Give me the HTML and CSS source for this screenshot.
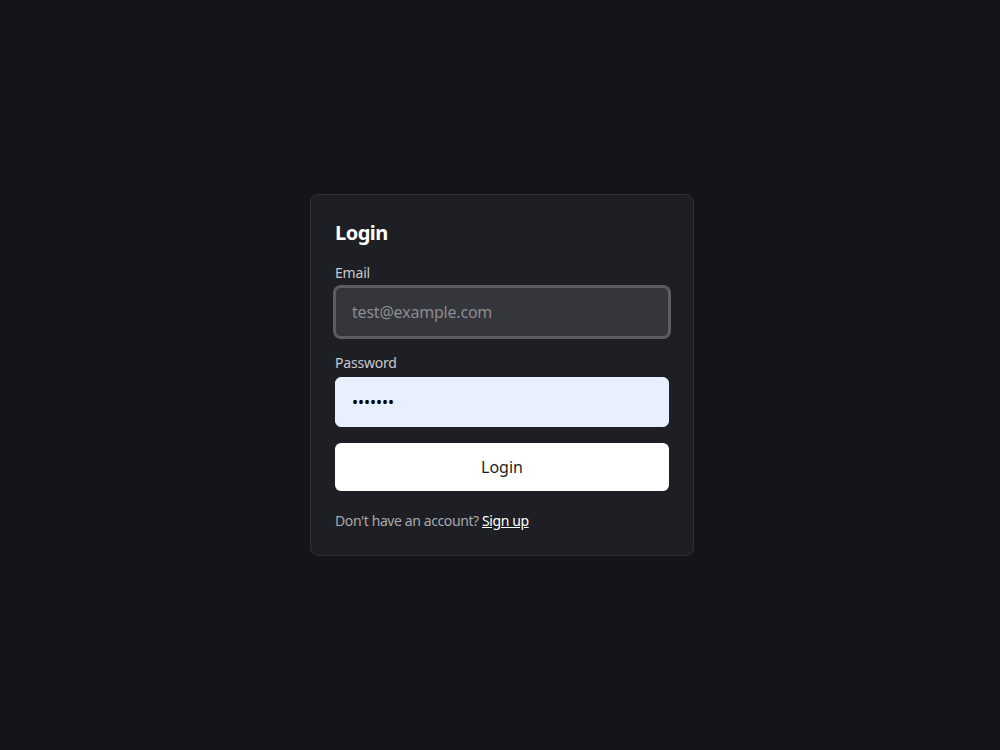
FILE: index.html
```html
<!DOCTYPE html>
<html lang="en">
<head>
<meta charset="utf-8">
<title>Login</title>
<link rel="stylesheet" href="styles.css">
</head>
<body>
<main class="page">
  <form class="card">
    <h1 class="title">Login</h1>
    <div class="field">
      <label class="label" for="email">Email</label>
      <input class="input input-focus" id="email" type="email" placeholder="test@example.com">
    </div>
    <div class="field">
      <label class="label" for="password">Password</label>
      <input class="input input-filled" id="password" type="password" value="1234567">
    </div>
    <button class="btn" type="button">Login</button>
    <p class="footer">Don't have an account? <a class="link" href="#">Sign up</a></p>
  </form>
</main>
</body>
</html>
```
FILE: styles.css
```css
* { box-sizing: border-box; }
html, body { margin: 0; height: 100%; }
body {
  background: #141519;
  font-family: "Noto Sans", "Open Sans", sans-serif;
  color: #e6e6ea;
}
.page {
  height: 100%;
  display: flex;
  align-items: center;
  justify-content: center;
  padding-left: 4px;
}
.card {
  width: 384px;
  background: #1e1f24;
  border: 1px solid #2f3036;
  border-radius: 8px;
  padding: 24px;
  display: flex;
  flex-direction: column;
}
.title {
  margin: 0 0 16px;
  font-size: 20px;
  line-height: 28px;
  font-weight: 700;
  color: #ffffff;
  letter-spacing: -0.5px;
}
.field {
  display: flex;
  flex-direction: column;
  gap: 4px;
  margin-bottom: 16px;
}
.label {
  font-size: 14px;
  line-height: 20px;
  color: #c9c9ce;
  letter-spacing: -0.2px;
}
.input {
  height: 50px;
  border-radius: 6px;
  padding: 0 16px;
  font-family: inherit;
  font-size: 16px;
  outline: none;
}
.input-focus {
  background: #35363b;
  border: 1px solid #5c5d62;
  box-shadow: 0 0 0 2px #5c5d62;
  color: #e6e6ea;
  letter-spacing: -0.2px;
}
.input-focus::placeholder { color: #8b8c91; }
.input-filled {
  background: #e8f0fe;
  border: 1px solid #e8f0fe;
  color: #000;
}
.btn {
  height: 48px;
  border: none;
  border-radius: 6px;
  background: #ffffff;
  color: #1e1f24;
  font-family: inherit;
  font-size: 16px;
  cursor: pointer;
}
.footer {
  margin: 20px 0 0;
  font-size: 14px;
  line-height: 20px;
  color: #a8a8ad;
  letter-spacing: -0.4px;
}
.link {
  color: #ffffff;
  text-decoration: underline;
}
```
